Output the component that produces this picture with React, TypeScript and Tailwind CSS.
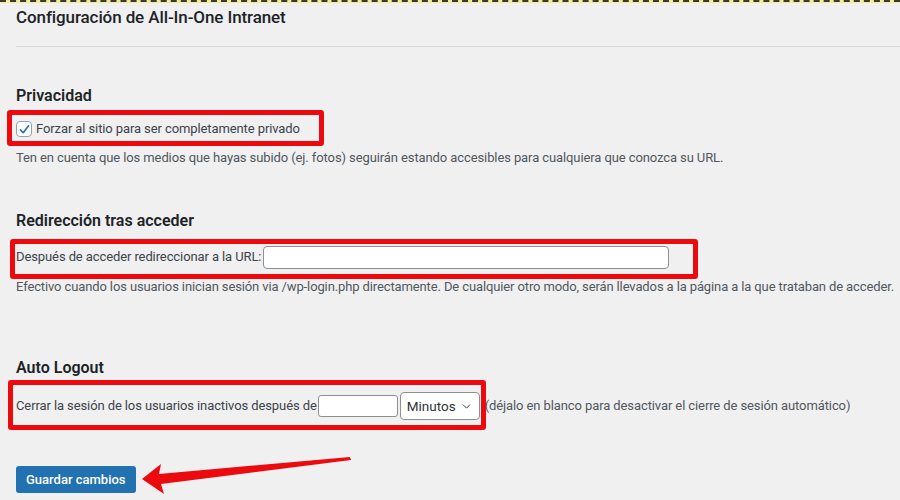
import { ChevronDown } from 'lucide-react'

const font = { fontFamily: 'Roboto, "Liberation Sans", sans-serif' }

function RedBox({ className }: { className: string }) {
  return <span className={`pointer-events-none absolute rounded-[3px] border-[5px] border-[#ec0a0f] ${className}`} />
}

export default function App() {
  return (
    <div className="relative min-h-[500px] w-[900px] overflow-hidden bg-[#f0f0f1] text-[#3c434a]" style={font}>
      <div className="h-[3px] bg-[#f3ec9a]">
        <div className="border-t-2 border-dashed border-[#3a3a2a]" />
      </div>

      <div className="pl-4">
        <h1 className="mt-[4px] text-[17px] leading-[20px] font-medium tracking-[-0.1px] text-[#1d2327]">Configuración de All-In-One Intranet</h1>
        <div className="mt-[19px] h-px bg-[#dcdcde]" />

        {/* Privacidad */}
        <h2 className="mt-[39px] text-[16px] leading-[20px] font-semibold text-[#1d2327]">Privacidad</h2>
        <div className="relative mt-[13px] flex h-5 items-center gap-[4px] text-[13px] tracking-[-0.1px]">
          <span className="flex h-4 w-4 items-center justify-center rounded-[4px] border border-[#8ca3c0] bg-white">
            <svg viewBox="0 0 16 16" className="h-[13px] w-[13px]">
              <path d="M3 8.5 L6.5 12 L13 3.5" fill="none" stroke="#2271b1" strokeWidth="2" strokeLinecap="round" strokeLinejoin="round" />
            </svg>
          </span>
          <span>Forzar al sitio para ser completamente privado</span>
          <RedBox className="left-[-9px] top-[-9px] h-[36px] w-[317px]" />
        </div>
        <p className="mt-[10px] text-[13px] leading-[18px] tracking-[-0.1px] text-[#50575e]">
          Ten en cuenta que los medios que hayas subido (ej. fotos) seguirán estando accesibles para cualquiera que conozca su URL.
        </p>

        {/* Redirección */}
        <h2 className="mt-[44px] text-[16px] leading-[20px] font-semibold text-[#1d2327]">Redirección tras acceder</h2>
        <div className="relative mt-[14px] flex h-6 items-center text-[13px] tracking-[-0.1px]">
          <span>Después de acceder redireccionar a la URL:</span>
          <span className="ml-[2px] h-[23px] w-[406px] rounded-[4px] border border-[#8c8f94] bg-white" />
          <RedBox className="left-[-6px] top-[-6px] h-[40px] w-[688px]" />
        </div>
        <p className="mt-[9px] whitespace-nowrap text-[13px] leading-[18px] tracking-[-0.12px] text-[#50575e]">
          Efectivo cuando los usuarios inician sesión via /wp-login.php directamente. De cualquier otro modo, serán llevados a la página a la que trataban de acceder.
        </p>

        {/* Auto Logout */}
        <h2 className="mt-[62px] text-[16px] leading-[20px] font-semibold text-[#1d2327]">Auto Logout</h2>
        <div className="relative mt-[14px] flex h-7 items-center text-[13px] tracking-[-0.1px]">
          <span>Cerrar la sesión de los usuarios inactivos después de</span>
          <span className="ml-[1px] h-[22px] w-[80px] rounded-[3px] border border-[#8c8f94] bg-white" />
          <span className="ml-[2px] flex h-[28px] w-[80px] items-center justify-between rounded-[4px] border border-[#8c8f94] bg-white pl-[6px] pr-[6px] text-[13.5px] tracking-normal text-[#2c3338]">
            Minutos
            <ChevronDown className="h-[13px] w-[13px]" strokeWidth={1.75} />
          </span>
          <span className="ml-[5px] text-[#50575e]">(déjalo en blanco para desactivar el cierre de sesión automático)</span>
          <RedBox className="left-[-8px] top-[-12px] h-[50px] w-[478px]" />
        </div>

        <button className="mt-[46px] h-[27px] rounded-[3px] bg-[#2271b1] px-[10px] text-[13px] font-medium text-white">Guardar cambios</button>
      </div>

      <svg className="pointer-events-none absolute left-0 top-0 h-[500px] w-[900px]" viewBox="0 0 900 500">
        <polygon points="142,479 161,464 159,474 350,457 351,460 161,484 164,494" fill="#ec0a0f" />
      </svg>
    </div>
  )
}
